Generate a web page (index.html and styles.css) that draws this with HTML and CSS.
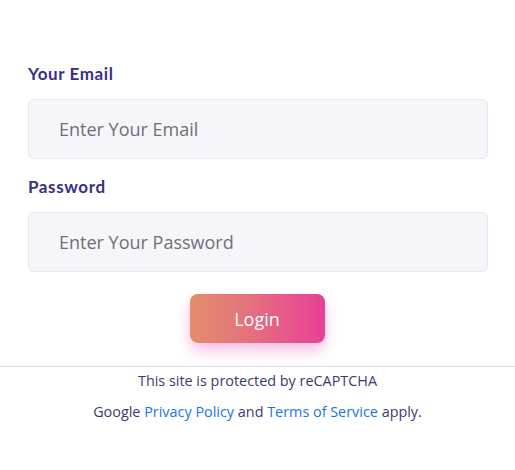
FILE: index.html
```html
<!DOCTYPE html>
<html>
<head>
<meta charset="utf-8">
<link rel="stylesheet" href="styles.css">
</head>
<body>
<form class="login">
  <div class="fields">
    <label class="label" for="email">Your Email</label>
    <input class="input" id="email" type="text" placeholder="Enter Your Email">
    <label class="label label-pw" for="pw">Password</label>
    <input class="input" id="pw" type="password" placeholder="Enter Your Password">
    <div class="actions">
      <button class="btn" type="button">Login</button>
    </div>
  </div>
  <div class="notice">
    <p class="line">This site is protected by reCAPTCHA</p>
    <p class="line">Google <a href="#">Privacy Policy</a> and <a href="#">Terms of Service</a> apply.</p>
  </div>
</form>
</body>
</html>
```
FILE: styles.css
```css
html, body {
  margin: 0;
  padding: 0;
  background: #ffffff;
}
.login {
  width: 515px;
  font-family: "Open Sans", "Noto Sans", sans-serif;
}
.fields {
  padding: 63px 27px 0 28px;
  display: flex;
  flex-direction: column;
}
.label {
  font-family: "Lato", "Liberation Sans", sans-serif;
  font-weight: 700;
  font-size: 17px;
  line-height: 22px;
  color: #3b2f85;
  letter-spacing: 0.6px;
}
.label-pw {
  margin-top: 17px;
}
.input {
  box-sizing: border-box;
  margin-top: 14px;
  height: 60px;
  width: 460px;
  border: 1px solid #e9e8f1;
  border-radius: 5px;
  background: #f6f5fa;
  padding: 0 30px;
  font-family: "Open Sans", sans-serif;
  font-size: 18px;
  color: #5b5e6a;
  outline: none;
}
.input::placeholder {
  color: #6d707b;
}
.actions {
  display: flex;
  justify-content: center;
  margin-top: 22px;
  padding-right: 2px;
}
.btn {
  width: 135px;
  height: 49px;
  border: 0;
  border-radius: 8px;
  background: linear-gradient(90deg, #e38e6c 0%, #e4707e 45%, #e93f98 100%);
  color: #ffffff;
  font-family: "Open Sans", sans-serif;
  font-size: 18px;
  box-shadow: 0 8px 14px rgba(240, 120, 200, 0.45);
  cursor: pointer;
}
.notice {
  margin-top: 23px;
  border-top: 1px solid #dcdae6;
  text-align: center;
  padding-top: 5px;
}
.line {
  margin: 0 0 13px;
  font-size: 14.4px;
  line-height: 18px;
  color: #3d3a6e;
}
.line a {
  color: #1a73e8;
  text-decoration: none;
}
```
